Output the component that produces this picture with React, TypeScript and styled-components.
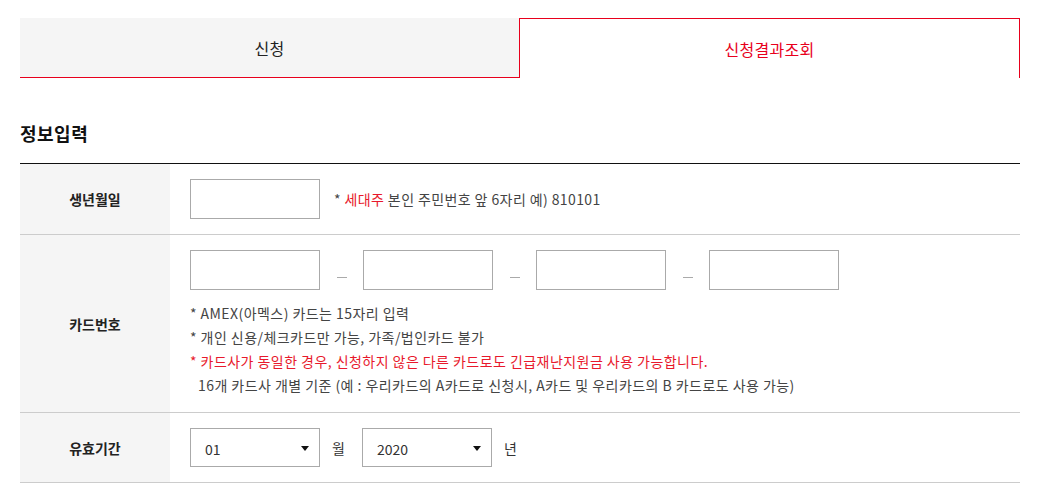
import styled, { createGlobalStyle } from "styled-components";

const GlobalStyle = createGlobalStyle`
  body {
    margin: 0;
    background: #fff;
    font-family: "Noto Sans CJK KR", "Noto Sans", sans-serif;
    color: #333;
  }
`;

const Page = styled.div`
  width: 1000px;
  padding: 18px 20px 0;
`;

const Tabs = styled.div`
  display: flex;
  height: 60px;
`;

const Tab = styled.div<{ $active?: boolean }>`
  flex: 1;
  display: flex;
  align-items: center;
  justify-content: center;
  font-size: 16px;
  letter-spacing: 0.3px;
  box-sizing: border-box;
  color: ${(p) => (p.$active ? "#e8001c" : "#222")};
  background: ${(p) => (p.$active ? "#fff" : "#f5f5f5")};
  border: ${(p) => (p.$active ? "1px solid #e8001c" : "none")};
  border-bottom: ${(p) => (p.$active ? "none" : "1px solid #e8001c")};
`;

const Title = styled.h3`
  margin: 42px 0 0;
  font-size: 18px;
  font-weight: bold;
  color: #111;
  line-height: 26px;
  letter-spacing: 0.5px;
`;

const Table = styled.div`
  margin-top: 17px;
  border-top: 1px solid #111;
`;

const Row = styled.div`
  display: flex;
  border-bottom: 1px solid #ccc;
`;

const Label = styled.div`
  width: 150px;
  flex-shrink: 0;
  background: #f5f5f5;
  display: flex;
  align-items: center;
  justify-content: center;
  font-size: 14px;
  font-weight: bold;
  color: #222;
`;

const Cell = styled.div`
  flex: 1;
  padding: 15px 20px;
`;

const Line = styled.div`
  display: flex;
  align-items: center;
`;

const Input = styled.div`
  width: 130px;
  height: 40px;
  box-sizing: border-box;
  border: 1px solid #aaa;
  background: #fff;
`;

const Hint = styled.span`
  margin-left: 14px;
  font-size: 14px;
  letter-spacing: 0.4px;
  color: #444;
`;

const Red = styled.span`
  color: #e8192c;
`;

const Dash = styled.span`
  width: 10px;
  height: 1px;
  background: #aaa;
  margin: 14px 16px 0 17px;
`;

const Notes = styled.div`
  margin-top: 11px;
  font-size: 14px;
  line-height: 24px;
  letter-spacing: 0.45px;
  color: #444;
`;

const Note = styled.div<{ $red?: boolean; $indent?: boolean }>`
  color: ${(p) => (p.$red ? "#e8192c" : "#444")};
  padding-left: ${(p) => (p.$indent ? "8px" : "0")};
`;

const Select = styled.div`
  width: 130px;
  height: 39px;
  box-sizing: border-box;
  border: 1px solid #aaa;
  display: flex;
  align-items: center;
  justify-content: space-between;
  padding: 2px 10px 0 14px;
  font-size: 14px;
  color: #333;
`;

const Arrow = styled.span`
  width: 0;
  height: 0;
  border-left: 4px solid transparent;
  border-right: 4px solid transparent;
  border-top: 5px solid #111;
`;

const Unit = styled.span`
  font-size: 14px;
  color: #333;
  margin: 0 17px 0 12px;
`;

const App = () => {
  return (
    <Page>
      <GlobalStyle />
      <Tabs>
        <Tab>신청</Tab>
        <Tab $active>신청결과조회</Tab>
      </Tabs>
      <Title>정보입력</Title>
      <Table>
        <Row>
          <Label>생년월일</Label>
          <Cell>
            <Line>
              <Input />
              <Hint>
                * <Red>세대주</Red> 본인 주민번호 앞 6자리 예) 810101
              </Hint>
            </Line>
          </Cell>
        </Row>
        <Row>
          <Label>카드번호</Label>
          <Cell>
            <Line>
              <Input />
              <Dash />
              <Input />
              <Dash />
              <Input />
              <Dash />
              <Input />
            </Line>
            <Notes>
              <Note>* AMEX(아멕스) 카드는 15자리 입력</Note>
              <Note>* 개인 신용/체크카드만 가능, 가족/법인카드 불가</Note>
              <Note $red>
                * 카드사가 동일한 경우, 신청하지 않은 다른 카드로도 긴급재난지원금 사용 가능합니다.
              </Note>
              <Note $indent>
                16개 카드사 개별 기준 (예 : 우리카드의 A카드로 신청시, A카드 및 우리카드의 B 카드로도 사용 가능)
              </Note>
            </Notes>
          </Cell>
        </Row>
        <Row>
          <Label>유효기간</Label>
          <Cell>
            <Line>
              <Select>
                01
                <Arrow />
              </Select>
              <Unit>월</Unit>
              <Select>
                2020
                <Arrow />
              </Select>
              <Unit>년</Unit>
            </Line>
          </Cell>
        </Row>
      </Table>
    </Page>
  );
};

export default App;
